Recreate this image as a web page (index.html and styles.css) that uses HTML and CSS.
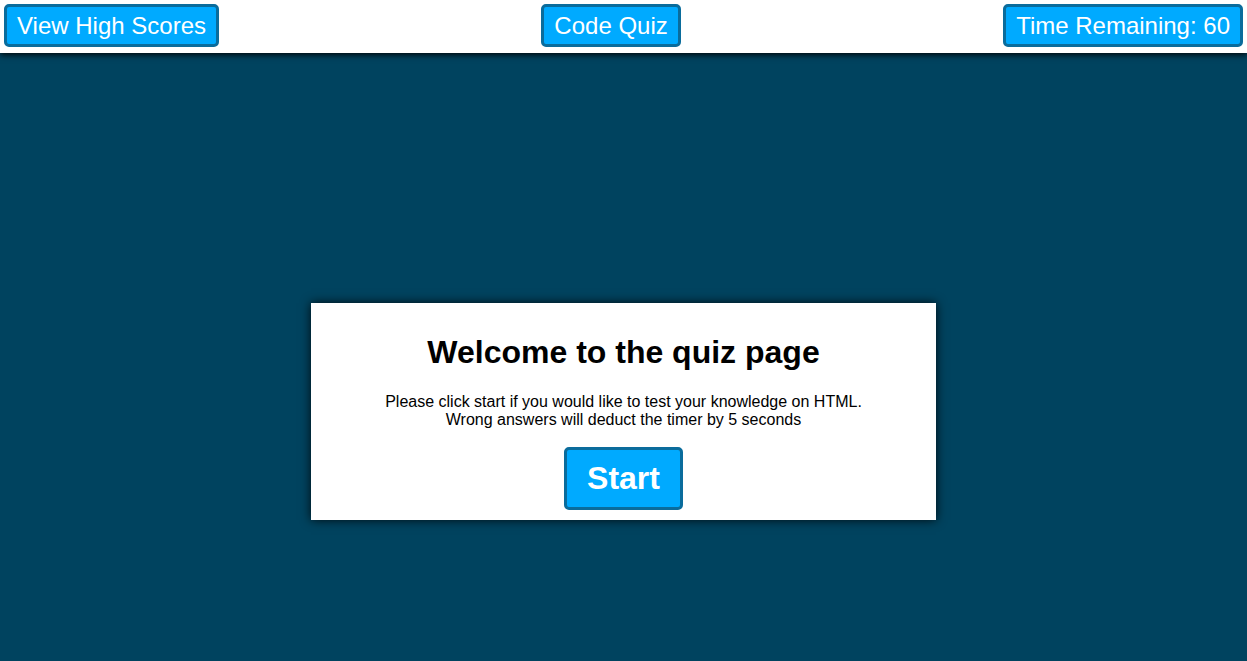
FILE: index.html
```html
<!DOCTYPE html>
<html>
<head>
<meta charset="utf-8">
<title>Code Quiz</title>
<link rel="stylesheet" href="styles.css">
</head>
<body>
<header class="topbar">
  <button class="btn btn-nav">View High Scores</button>
  <button class="btn btn-nav">Code Quiz</button>
  <button class="btn btn-nav">Time Remaining: 60</button>
</header>
<main class="stage">
  <section class="card">
    <h1 class="card-title">Welcome to the quiz page</h1>
    <p class="card-text">Please click start if you would like to test your knowledge on HTML.<br>Wrong answers will deduct the timer by 5 seconds</p>
    <button class="btn btn-start">Start</button>
  </section>
</main>
</body>
</html>
```
FILE: styles.css
```css
html, body {
  margin: 0;
  padding: 0;
  height: 100%;
}
body {
  font-family: "Liberation Sans", Arial, sans-serif;
  background: #00435f;
  display: flex;
  flex-direction: column;
}
.topbar {
  position: relative;
  z-index: 2;
  height: 53px;
  box-sizing: border-box;
  background: #ffffff;
  display: flex;
  justify-content: space-between;
  align-items: flex-start;
  padding: 4px 4px 0 4px;
  box-shadow: 0 2px 6px rgba(0, 0, 0, 0.9);
}
.btn {
  font-family: "Liberation Sans", Arial, sans-serif;
  background: #00aaff;
  color: #ffffff;
  border: 3px solid #0a6c9c;
  border-radius: 5px;
  cursor: pointer;
}
.btn-nav {
  font-size: 24px;
  line-height: 27px;
  padding: 5px 10px;
}
.stage {
  flex: 1;
  background: #00435f;
  display: flex;
  justify-content: center;
  align-items: flex-start;
  padding-top: 250px;
}
.card {
  width: 625px;
  box-sizing: border-box;
  background: #ffffff;
  text-align: center;
  padding: 10px 20px 10px;
  box-shadow: 0 0 10px rgba(0, 0, 0, 0.85);
}
.card-title {
  font-size: 32px;
  line-height: 37px;
  margin: 21px 0 22px;
  color: #000;
}
.card-text {
  font-size: 16px;
  line-height: 18px;
  margin: 0 0 18px;
  color: #000;
}
.btn-start {
  font-size: 32px;
  font-weight: bold;
  line-height: 37px;
  padding: 10px 20px;
  display: inline-block;
  vertical-align: top;
}
```
